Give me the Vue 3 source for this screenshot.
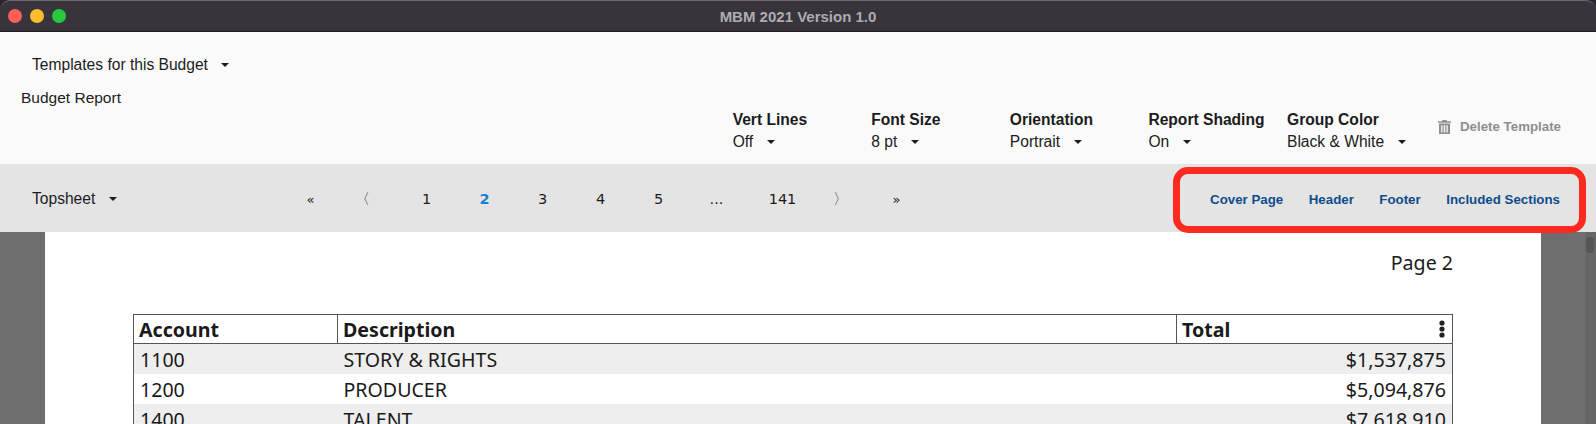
<script setup>
const settings = [
  { label: 'Vert Lines', value: 'Off' },
  { label: 'Font Size', value: '8 pt' },
  { label: 'Orientation', value: 'Portrait' },
  { label: 'Report Shading', value: 'On' },
  { label: 'Group Color', value: 'Black & White' },
]
const pages = ['«', '〈', '1', '2', '3', '4', '5', '...', '141', '〉', '»']
const links = ['Cover Page', 'Header', 'Footer', 'Included Sections']
const rows = [
  { account: '1100', description: 'STORY & RIGHTS', total: '$1,537,875' },
  { account: '1200', description: 'PRODUCER', total: '$5,094,876' },
  { account: '1400', description: 'TALENT', total: '$7,618,910' },
]
const pageClass = (page) => ({
  current: page === '2',
  quote: page === '«' || page === '»',
  angle: page === '〈' || page === '〉',
  prev: page === '〈',
  next: page === '〉',
  last: page === '141',
})
</script>

<template>
  <div class="window">
    <header class="titlebar">
      <div class="lights">
        <span class="light red"></span>
        <span class="light yellow"></span>
        <span class="light green"></span>
      </div>
      <span class="title">MBM 2021 Version 1.0</span>
    </header>

    <section class="toolbar">
      <div class="templates">
        <div class="dropdown template-select">Templates for this Budget<i class="caret"></i></div>
        <div class="template-name">Budget Report</div>
      </div>
      <div class="settings">
        <div v-for="item in settings" :key="item.label" class="setting">
          <div class="setting-label">{{ item.label }}</div>
          <div class="dropdown setting-value">{{ item.value }}<i class="caret"></i></div>
        </div>
        <div class="delete">
          <svg width="13" height="14" viewBox="0 0 13 14">
            <path fill="#8f8f8f" d="M4.5 0h4l.6 1.2H13v1.5H0V1.2h3.9zM1 3.6h11V14H1zm2.2 1.6v7.2h1.3V5.2zm2.6 0v7.2h1.4V5.2zm2.7 0v7.2h1.3V5.2z"/>
          </svg>
          <span>Delete Template</span>
        </div>
      </div>
    </section>

    <nav class="navbar">
      <div class="dropdown section-select">Topsheet<i class="caret"></i></div>
      <div class="pager">
        <span v-for="page in pages" :key="page" class="page-item" :class="pageClass(page)">{{ page }}</span>
      </div>
      <div class="links">
        <a v-for="link in links" :key="link">{{ link }}</a>
      </div>
      <div class="highlight"></div>
    </nav>

    <main class="viewer">
      <div class="sheet">
        <div class="page-number">Page 2</div>
        <table>
          <thead>
            <tr>
              <th class="col-account">Account</th>
              <th class="col-description">Description</th>
              <th class="col-total">
                Total
                <svg class="kebab" width="6" height="18" viewBox="0 0 6 18">
                  <circle cx="3" cy="3" r="2.6" />
                  <circle cx="3" cy="9" r="2.6" />
                  <circle cx="3" cy="15" r="2.6" />
                </svg>
              </th>
            </tr>
          </thead>
          <tbody>
            <tr v-for="row in rows" :key="row.account">
              <td>{{ row.account }}</td>
              <td>{{ row.description }}</td>
              <td class="amount">{{ row.total }}</td>
            </tr>
          </tbody>
        </table>
      </div>
      <div class="scrollbar"><div class="thumb"></div></div>
    </main>
  </div>
</template>

<style scoped>
.window {
  height: 424px;
  overflow: hidden;
  display: flex;
  flex-direction: column;
  font-family: "Liberation Sans", Arial, sans-serif;
  color: #1c1c1c;
  background: #2a2630;
}

.titlebar {
  position: relative;
  height: 32px;
  flex: none;
  box-sizing: border-box;
  display: flex;
  align-items: center;
  justify-content: center;
  background: #38343c;
  border-top: 1px solid #6a676e;
  border-bottom: 1px solid #1d1a22;
  border-radius: 10px 10px 0 0;
}

.lights {
  position: absolute;
  left: 8px;
  top: 8px;
  display: flex;
  gap: 8px;
}

.light {
  width: 14px;
  height: 14px;
  border-radius: 50%;
}

.red { background: #fe5f57; }
.yellow { background: #febc2e; }
.green { background: #28c840; }

.title {
  font-size: 15px;
  font-weight: 700;
  color: #aeacb0;
}

.toolbar {
  height: 132px;
  flex: none;
  box-sizing: border-box;
  display: flex;
  justify-content: space-between;
  background: #fafafa;
}

.dropdown {
  display: flex;
  align-items: center;
  font-size: 15.6px;
}

.caret {
  width: 0;
  height: 0;
  border-left: 4px solid transparent;
  border-right: 4px solid transparent;
  border-top: 4px solid #1c1c1c;
}

.templates {
  padding: 25px 0 0 21px;
}

.template-select {
  padding-left: 11px;
  height: 16px;
}

.template-select .caret {
  margin-left: 13px;
}

.template-name {
  margin-top: 17px;
  font-size: 15.5px;
  line-height: 16px;
}

.settings {
  display: flex;
  align-items: flex-end;
  padding: 0 35px 13px 0;
}

.setting {
  width: 138.6px;
}

.setting:nth-child(5) {
  width: 151px;
}

.setting-label {
  font-size: 15.6px;
  font-weight: 700;
  line-height: 18px;
  margin-bottom: 4px;
}

.setting-value {
  height: 18px;
}

.setting-value .caret {
  margin-left: 14px;
}

.delete {
  display: flex;
  align-items: center;
  gap: 9px;
  margin-bottom: 17px;
  font-size: 13.3px;
  font-weight: 700;
  color: #8f8f8f;
}

.navbar {
  position: relative;
  height: 68px;
  flex: none;
  display: flex;
  align-items: center;
  background: #e4e4e4;
}

.section-select {
  padding-left: 32px;
  padding-top: 2px;
  width: 200px;
}

.section-select .caret {
  margin-left: 14px;
}

.pager {
  display: flex;
  align-items: center;
  margin-left: 49.5px;
  margin-top: 2px;
  font-family: "DejaVu Sans", sans-serif;
  font-size: 14.5px;
}

.page-item {
  width: 58px;
  text-align: center;
}

.page-item.quote {
  font-size: 13px;
  color: #222;
}

.page-item.angle {
  font-size: 15px;
  color: #444;
}

.page-item.prev {
  margin: 0 6px 0 -6px;
}

.page-item.next {
  margin: 0 -2px 0 2px;
}

.page-item.last {
  margin: 0 -2px 0 8px;
}

.page-item.current {
  color: #1a7fd0;
  font-weight: 700;
}

.links {
  margin-left: auto;
  margin-top: 2px;
  padding-right: 36px;
  display: flex;
  gap: 25.5px;
  font-size: 13.3px;
  font-weight: 700;
  color: #0f4c8c;
}

.highlight {
  position: absolute;
  left: 1173px;
  top: 3px;
  width: 413px;
  height: 66px;
  box-sizing: border-box;
  border: 7px solid #ff2a1f;
  border-radius: 15px;
}

.viewer {
  flex: 1;
  min-height: 0;
  overflow: hidden;
  display: flex;
  background: #6e6e6e;
}

.sheet {
  width: 1496px;
  height: 300px;
  flex: none;
  margin-left: 45px;
  box-sizing: border-box;
  padding: 18px 88px 0;
  background: #fff;
  font-family: "Noto Sans", sans-serif;
  font-size: 19.6px;
  color: #1a1a1a;
}

.page-number {
  text-align: right;
  line-height: 26px;
  margin-bottom: 38px;
}

table {
  width: 100%;
  border-collapse: collapse;
  table-layout: fixed;
  border: 1px solid #555;
}

th {
  height: 29px;
  padding: 2px 5px 0;
  box-sizing: border-box;
  text-align: left;
  font-weight: 700;
  line-height: 24px;
  border: 1px solid #555;
  position: relative;
}

.col-account { width: 204px; }
.col-total { width: 276px; }

td {
  height: 30px;
  padding: 3px 6px 0;
  box-sizing: border-box;
  line-height: 24px;
}

tbody tr:nth-child(odd) {
  background: #eeeeee;
}

.amount {
  text-align: right;
}

.kebab {
  position: absolute;
  right: 7px;
  top: 5px;
  fill: #222;
}

.scrollbar {
  margin-left: auto;
  width: 11px;
  flex: none;
  background: #666;
}

.thumb {
  width: 8px;
  height: 16px;
  margin: 5px 0 0 1px;
  border-radius: 4px;
  background: #555;
}
</style>

<style>
body {
  background: #fff;
}
</style>
